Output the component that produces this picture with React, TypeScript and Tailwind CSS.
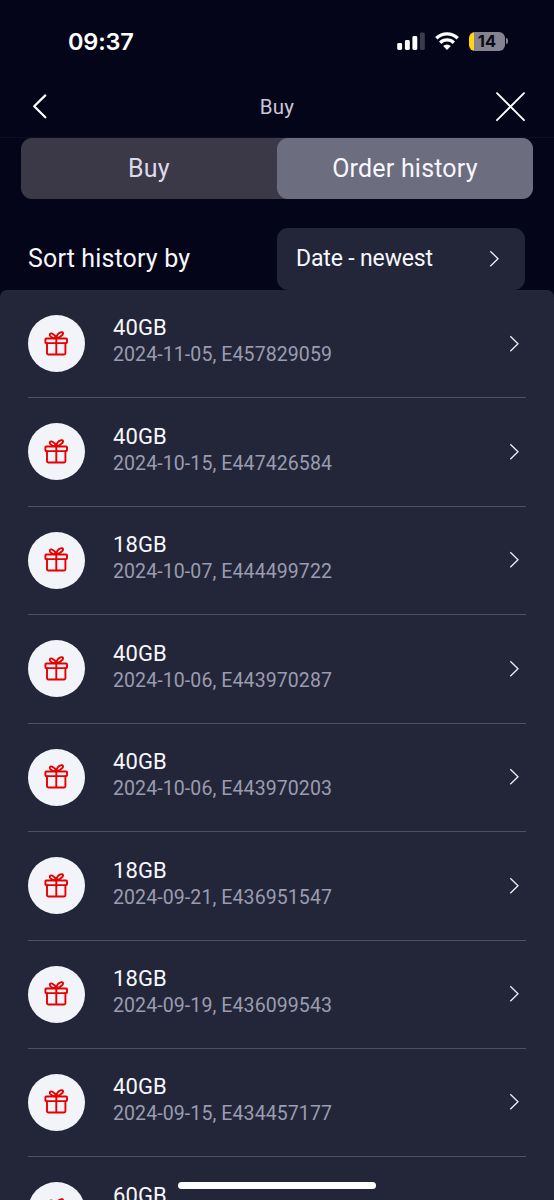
import React from 'react';

type Order = { size: string; details?: string };

const orders: Order[] = [
    { size: '40GB', details: '2024-11-05, E457829059' },
    { size: '40GB', details: '2024-10-15, E447426584' },
    { size: '18GB', details: '2024-10-07, E444499722' },
    { size: '40GB', details: '2024-10-06, E443970287' },
    { size: '40GB', details: '2024-10-06, E443970203' },
    { size: '18GB', details: '2024-09-21, E436951547' },
    { size: '18GB', details: '2024-09-19, E436099543' },
    { size: '40GB', details: '2024-09-15, E434457177' },
    { size: '60GB' },
];

const ChevronRight: React.FC = () => (
    <svg width="10" height="18" viewBox="0 0 10 18" fill="none" stroke="#eeeef6" strokeWidth="1.3">
        <path d="M1.300 1.200 9 8.700 1.300 16.200" />
    </svg>
);

const GiftIcon: React.FC = () => (
    <svg
        width="25"
        height="26"
        viewBox="0 0 25 26"
        fill="none"
        stroke="#e60000"
        strokeWidth="1.9"
        strokeLinecap="round"
        strokeLinejoin="round"
    >
        <rect x="1.400" y="7.500" width="21.600" height="4.600" rx="0.800" />
        <path d="M3 12.300v10a1.200 1.200 0 0 0 1.200 1.200h16a1.200 1.200 0 0 0 1.200-1.200v-10M12.300 7.500v16" />
        <path d="M12.200 7.200C9.700 7.200 6.800 6.400 5.900 4.300C5.400 2.800 6.900 2 8.200 2.600C10.300 3.500 11.600 5.300 12.200 7.200Z" />
        <path d="M12.200 7.200C12.600 4.500 14.700 1.700 17.400 1.100C19.100 0.900 19.500 2.500 18.400 3.900C16.900 5.800 14.700 6.900 12.200 7.200Z" />
    </svg>
);

const StatusBar: React.FC = () => (
    <div className="flex h-[76px] items-start justify-between pl-[68px] pr-[46px] pt-[31px]">
        <div className="mt-[-1px] font-['Inter'] text-[23.5px] font-semibold leading-[24px] tracking-[-0.2px] text-white">
            09:37
        </div>
        <div className="flex items-start">
            <svg width="28" height="20" viewBox="0 0 28 20" fill="#fff">
                <rect x="0.200" y="12" width="4.900" height="7" rx="1.400" />
                <rect x="7.900" y="9" width="4.900" height="10" rx="1.400" />
                <rect x="15.400" y="5" width="4.900" height="14" rx="1.400" />
                <rect x="22.900" y="1.500" width="4.900" height="17.500" rx="1.400" fill="#3c3a4b" />
            </svg>
            <svg className="ml-[10px]" width="24" height="20" viewBox="0 0 24 20" fill="none" stroke="#fff" strokeWidth="3.3">
                <path d="M1.300 7.200a15.300 15.300 0 0 1 21.400 0" />
                <path d="M5.200 11.700a9.700 9.700 0 0 1 13.600 0" />
                <path d="M12 18.900 8.200 15.100a5.400 5.400 0 0 1 7.600 0Z" fill="#fff" stroke="none" />
            </svg>
            <div className="ml-[10px] mt-[0.5px] flex h-[19px] w-[36px] items-center justify-center overflow-hidden rounded-[6px] bg-[linear-gradient(90deg,#ffd60a_5px,#84838f_5px)]">
                <span className="font-['Inter'] text-[16.500px] font-bold leading-none text-[#0b0a16]">14</span>
            </div>
            <div className="ml-px mt-[7px] h-[6px] w-[2px] rounded-r-full bg-[#84838f]" />
        </div>
    </div>
);

const Header: React.FC = () => (
    <header className="flex h-[62px] items-center justify-between border-b border-[#0d0e21] pl-[30px] pr-[29px]">
        <button className="w-[30px] pl-[2px]" aria-label="Back">
            <svg
                width="16"
                height="26"
                viewBox="0 0 16 26"
                fill="none"
                stroke="#fff"
                strokeWidth="2.2"
                strokeLinecap="round"
                strokeLinejoin="round"
            >
                <path d="M13.300 1.400 2.200 12.300l11.100 11" />
            </svg>
        </button>
        <h1 className="mr-px pt-[2px] text-[20.500px] leading-none tracking-[0.3px] text-[#c9c7db]">Buy</h1>
        <button className="w-[30px]" aria-label="Close">
            <svg width="30" height="30" viewBox="0 0 30 30" fill="none" stroke="#fff" strokeWidth="1.9" strokeLinecap="round">
                <path d="m2 1.200 27 27M29 1.200 2 28.200" />
            </svg>
        </button>
    </header>
);

const App: React.FC = () => {
    return (
        <div className="relative flex h-[1200px] w-[554px] flex-col overflow-hidden bg-[#040519] font-['Roboto',sans-serif]">
            <StatusBar />
            <Header />

            {/* Tabs */}
            <div className="mx-[21px] flex h-[61px] shrink-0 rounded-[11px] bg-[#3b3848]">
                <button className="flex-1 text-[25px] tracking-[0.2px] text-[#dcdae9]">Buy</button>
                <button className="flex-1 rounded-[11px] bg-[#6d6d80] text-[25px] tracking-[0.2px] text-[#f7f7fd]">
                    Order history
                </button>
            </div>

            {/* Sorting */}
            <div className="mt-[29px] flex h-[62px] shrink-0 items-center justify-between pl-[28px] pr-[29px]">
                <span className="text-[25px] tracking-[0.15px] text-[#f7f7fd]">Sort history by</span>
                <button className="flex h-full w-[248px] items-center justify-between rounded-[11px] bg-[#232639] pl-[19px] pr-[26px] text-[23px] tracking-[-0.15px] text-[#f7f7fd]">
                    Date - newest
                    <ChevronRight />
                </button>
            </div>

            {/* Orders */}
            <ul className="flex-1 overflow-hidden rounded-t-[7px] bg-[#232639] pl-[28px] pr-[28px]">
                {orders.map((order, index) => (
                    <li
                        key={index}
                        className="flex h-[108.43px] items-start border-b-[1.500px] border-[#50505f] pr-[7px] pt-[25px]"
                    >
                        <div className="flex size-[57px] shrink-0 items-center justify-center rounded-full bg-[#f3f4fa]">
                            <GiftIcon />
                        </div>
                        <div className="-mt-[0.600px] ml-[28px] flex-1">
                            <div className="text-[22px] leading-[27px] tracking-[0.1px] text-[#f7f7fd]">{order.size}</div>
                            {order.details && (
                                <div className="text-[19.500px] leading-[27px] tracking-[0.1px] text-[#9b9caf]">
                                    {order.details}
                                </div>
                            )}
                        </div>
                        <div className="flex h-[57px] items-center">
                            <ChevronRight />
                        </div>
                    </li>
                ))}
            </ul>

            {/* Home indicator */}
            <div className="absolute bottom-[11px] left-[178px] h-[7px] w-[198px] rounded-full bg-white" />
        </div>
    );
};

export default App;
